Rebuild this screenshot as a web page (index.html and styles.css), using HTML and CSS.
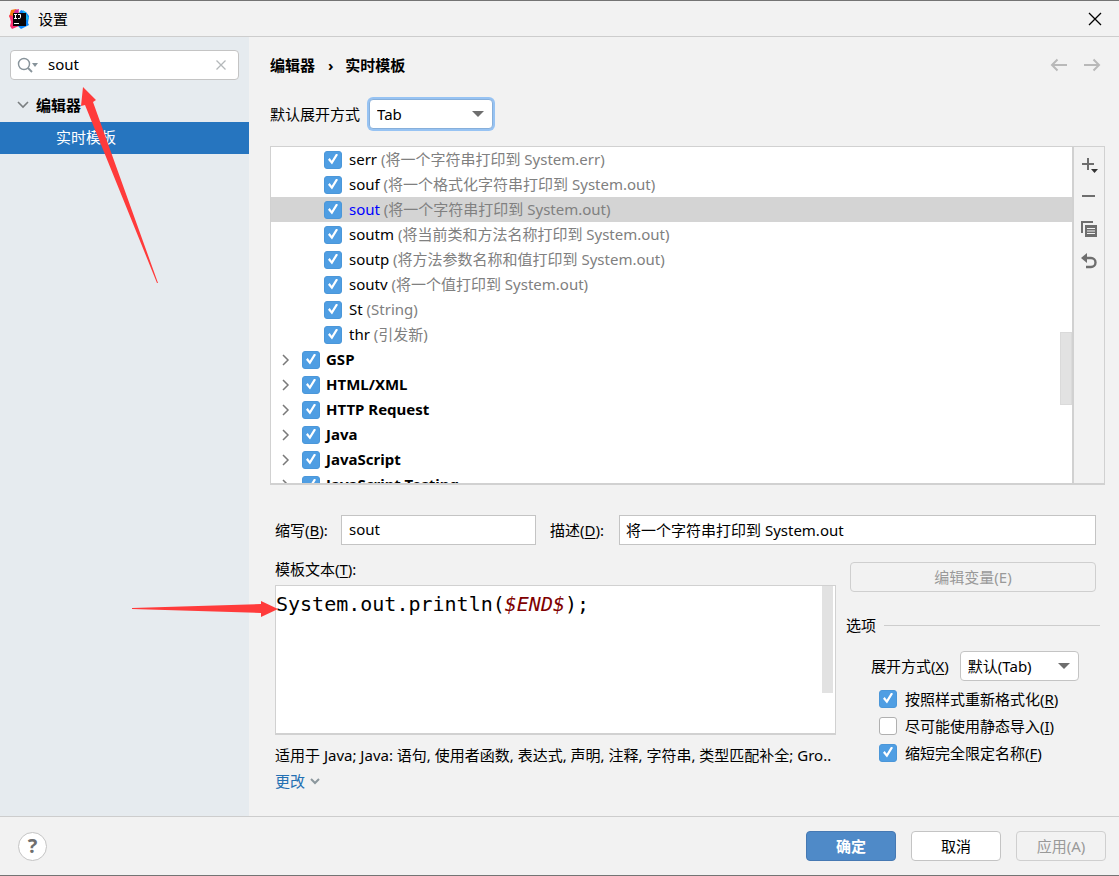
FILE: index.html
```html
<!DOCTYPE html>
<html lang="zh-CN">
<head>
<meta charset="UTF-8" />
<meta name="viewport" content="width=device-width, initial-scale=1" />
<title>设置</title>
<link rel="stylesheet" href="styles.css">
</head>
<body>

<div class="dialog">
  <header class="titlebar">
    <svg class="logo" width="20" height="20" viewBox="0 0 20 20">
      <path d="M2 1 L7 0 L10 3 L5 10 L0 8 L1 5Z" fill="#f97a12"/>
      <path d="M0 6 L4 7 L6 14 L10 17 L3 20 L1 17 L2 13Z" fill="#fc2f72"/>
      <path d="M6 1 L10 0 L9 6 L4 6Z" fill="#d22d9b"/>
      <path d="M12 1 L17 3 L20 7 L19 14 L20 16 L12 20 L9 17 L10 4Z" fill="#0a83fa"/>
      <path d="M14 1 L17 4 L20 10 L17 11 L14 5Z" fill="#14b9ef"/>
      <rect x="4" y="4" width="13" height="13" fill="#0b0508"/>
      <path d="M5 5.500h3M6.500 5.500v4M5 9.500h3M9 5.500h2.500v3q0 1-1.500 1h-1" fill="none" stroke="#fff"/>
      <path d="M5 14.500h5" stroke="#fff"/>
    </svg>
    <h1>设置</h1>
    <button type="button" class="icon-button close" aria-label="关闭">
      <svg width="14" height="14" viewBox="0 0 14 14"><path d="M1 1l12 12M13 1L1 13" stroke="#000" stroke-width="1.300"/></svg>
    </button>
  </header>

  <div class="body">
    <aside class="sidebar">
      <div class="search">
        <svg width="22" height="16" viewBox="0 0 22 16">
          <circle cx="7" cy="7" r="5.500" fill="none" stroke="#87939a" stroke-width="1.400"/>
          <path d="M11 11l4 4" stroke="#87939a" stroke-width="1.800"/>
          <path d="M15 6h6l-3 4z" fill="#87939a"/>
        </svg>
        <input type="text" id="searchInput" value="sout" aria-label="搜索" />
        <button type="button" class="icon-button" aria-label="清除">
          <svg width="10" height="10" viewBox="0 0 10 10"><path d="M0.500 0.500l9 9M9.500 0.500l-9 9" stroke="#b4b8ba" stroke-width="1.300"/></svg>
        </button>
      </div>
      <nav>
        <a href="#editor" class="nav-group">
          <svg width="12" height="8" viewBox="0 0 12 8"><path d="M1 1l5 5 5-5" fill="none" stroke="#7a7e80" stroke-width="1.600"/></svg>
          编辑器
        </a>
        <a href="#live-templates" class="nav-item selected">实时模板</a>
      </nav>
    </aside>

    <main class="content">
      <div class="page-head">
        <h2>编辑器 <span>›</span> 实时模板</h2>
        <button type="button" class="icon-button" aria-label="后退">
          <svg width="18" height="14" viewBox="0 0 18 14"><path d="M17 7H2M7.500 1.500L2 7l5.500 5.500" fill="none" stroke="#b9b9b9" stroke-width="2"/></svg>
        </button>
        <button type="button" class="icon-button" aria-label="前进">
          <svg width="18" height="14" viewBox="0 0 18 14"><path d="M1 7h15M10.500 1.500L16 7l-5.500 5.500" fill="none" stroke="#b9b9b9" stroke-width="2"/></svg>
        </button>
      </div>

      <div class="expand-row">
        <label for="expandSelect">默认展开方式</label>
        <div class="select focused">
          <select id="expandSelect"><option>Tab</option><option>Enter</option></select>
        </div>
      </div>

      <div class="templates">
        <div class="tree">
          <ul>
            <li class="leaf"><input type="checkbox" id="t1" checked /><label for="t1">serr <span>(将一个字符串打印到 System.err)</span></label></li>
            <li class="leaf"><input type="checkbox" id="t2" checked /><label for="t2">souf <span>(将一个格式化字符串打印到 System.out)</span></label></li>
            <li class="leaf active"><input type="checkbox" id="t3" checked /><label for="t3">sout <span>(将一个字符串打印到 System.out)</span></label></li>
            <li class="leaf"><input type="checkbox" id="t4" checked /><label for="t4">soutm <span>(将当前类和方法名称打印到 System.out)</span></label></li>
            <li class="leaf"><input type="checkbox" id="t5" checked /><label for="t5">soutp <span>(将方法参数名称和值打印到 System.out)</span></label></li>
            <li class="leaf"><input type="checkbox" id="t6" checked /><label for="t6">soutv <span>(将一个值打印到 System.out)</span></label></li>
            <li class="leaf"><input type="checkbox" id="t7" checked /><label for="t7">St <span>(String)</span></label></li>
            <li class="leaf"><input type="checkbox" id="t8" checked /><label for="t8">thr <span>(引发新)</span></label></li>
            <li class="group"><svg width="8" height="12" viewBox="0 0 8 12"><path d="M1 1l5 5-5 5"/></svg><input type="checkbox" id="g1" checked /><label for="g1">GSP</label></li>
            <li class="group"><svg width="8" height="12" viewBox="0 0 8 12"><path d="M1 1l5 5-5 5"/></svg><input type="checkbox" id="g2" checked /><label for="g2">HTML/XML</label></li>
            <li class="group"><svg width="8" height="12" viewBox="0 0 8 12"><path d="M1 1l5 5-5 5"/></svg><input type="checkbox" id="g3" checked /><label for="g3">HTTP Request</label></li>
            <li class="group"><svg width="8" height="12" viewBox="0 0 8 12"><path d="M1 1l5 5-5 5"/></svg><input type="checkbox" id="g4" checked /><label for="g4">Java</label></li>
            <li class="group"><svg width="8" height="12" viewBox="0 0 8 12"><path d="M1 1l5 5-5 5"/></svg><input type="checkbox" id="g5" checked /><label for="g5">JavaScript</label></li>
            <li class="group"><svg width="8" height="12" viewBox="0 0 8 12"><path d="M1 1l5 5-5 5"/></svg><input type="checkbox" id="g6" checked /><label for="g6">JavaScript Testing</label></li>
          </ul>
          <div class="tree-thumb"></div>
        </div>
        <div class="toolbar">
          <button type="button" class="icon-button" aria-label="添加">
            <svg width="18" height="18" viewBox="0 0 18 18"><path d="M8 2v12M2 8h12" stroke="#6e6e6e" stroke-width="2"/><path d="M11 13h7l-3.500 4z" fill="#333"/></svg>
          </button>
          <button type="button" class="icon-button" aria-label="删除">
            <svg width="18" height="18" viewBox="0 0 18 18"><path d="M2 8h13" stroke="#6e6e6e" stroke-width="2"/></svg>
          </button>
          <button type="button" class="icon-button" aria-label="复制">
            <svg width="18" height="18" viewBox="0 0 18 18"><path d="M2 13V2h11" fill="none" stroke="#6e6e6e" stroke-width="2"/><path d="M5 5h12v12H5z" fill="#6e6e6e"/><path d="M7 8.500h8M7 11h8M7 13.500h8" stroke="#f2f2f2"/></svg>
          </button>
          <button type="button" class="icon-button" aria-label="还原">
            <svg width="18" height="18" viewBox="0 0 18 18"><path d="M5 6h6a4.500 4.500 0 0 1 0 9H6" fill="none" stroke="#6e6e6e" stroke-width="2.400"/><path d="M1 6l6-5v10z" fill="#6e6e6e"/></svg>
          </button>
        </div>
      </div>

      <form class="details">
        <div class="fields">
          <label for="abbrInput">缩写(<u>B</u>):</label>
          <input type="text" id="abbrInput" class="abbr" value="sout" />
          <label for="descInput">描述(<u>D</u>):</label>
          <input type="text" id="descInput" class="desc" value="将一个字符串打印到 System.out" />
        </div>

        <div class="columns">
          <div class="template">
            <div class="template-label" id="templateLabel">模板文本(<u>T</u>):</div>
            <div class="code">
              <div class="code-text" role="textbox" aria-multiline="true" aria-labelledby="templateLabel" contenteditable="true" spellcheck="false">System.out.println(<i>$END$</i>);</div>
              <div class="code-thumb"></div>
            </div>
            <p class="applicable">适用于 Java; Java: 语句, 使用者函数, 表达式, 声明, 注释, 字符串, 类型匹配补全; Gro..</p>
            <a href="#change" class="change">更改
              <svg width="10" height="7" viewBox="0 0 10 7"><path d="M1 1l4 4 4-4" fill="none" stroke="#8b979d" stroke-width="2"/></svg>
            </a>
          </div>

          <div class="options">
            <button type="button" class="button edit-vars" disabled>编辑变量(E)</button>
            <h3>选项</h3>
            <div class="option-expand">
              <label for="optExpand">展开方式(<u>X</u>)</label>
              <div class="select">
                <select id="optExpand"><option>默认(Tab)</option><option>Enter</option></select>
              </div>
            </div>
            <div class="option"><input type="checkbox" id="optReformat" checked /><label for="optReformat">按照样式重新格式化(<u>R</u>)</label></div>
            <div class="option"><input type="checkbox" id="optStatic" /><label for="optStatic">尽可能使用静态导入(<u>I</u>)</label></div>
            <div class="option"><input type="checkbox" id="optShorten" checked /><label for="optShorten">缩短完全限定名称(<u>F</u>)</label></div>
          </div>
        </div>
      </form>
    </main>
  </div>

  <footer class="footer">
    <button type="button" class="help" aria-label="帮助">?</button>
    <button type="button" class="button primary">确定</button>
    <button type="button" class="button">取消</button>
    <button type="button" class="button" disabled>应用(A)</button>
  </footer>

  <!-- pointers to the search box and the template text -->
  <svg class="pointer pointer-search" width="80" height="200" viewBox="0 0 80 200"><path d="M3 0L16 13L13 15L78 196L77 196L5 18L1 19Z" fill="#ff3b3b"/></svg>
  <svg class="pointer pointer-code" width="146" height="16" viewBox="0 0 146 16"><path d="M0 7L129 3V0L146 8L129 16V12L0 8Z" fill="#ff3b3b"/></svg>
</div>

</body>
</html>
```
FILE: styles.css
```css
* {
  box-sizing: border-box;
}
body {
  margin: 0;
  font-family: "Noto Sans", "Noto Sans CJK SC", sans-serif;
  font-size: 15px;
  line-height: 20px;
  color: #000;
  background: #f2f2f2;
}
h1, h2, h3, p, ul {
  margin: 0;
  padding: 0;
  font-size: 15px;
}
input, select, button {
  font: inherit;
  color: inherit;
}
svg {
  display: block;
  flex: none;
}
a {
  text-decoration: none;
}
u {
  text-underline-offset: 2px;
}
.dialog {
  position: relative;
  display: flex;
  flex-direction: column;
  height: 100vh;
  min-height: 700px;
  border-top: 1px solid #747474;
  border-bottom: 1px solid #747474;
}
.icon-button {
  display: flex;
  padding: 0;
  border: none;
  background: none;
  cursor: pointer;
}

/* Title bar */
.titlebar {
  display: flex;
  align-items: center;
  height: 36px;
  padding: 0 17px 0 9px;
  border-bottom: 1px solid #cdcdcd;
}
.titlebar h1 {
  flex: 1;
  margin-left: 9px;
  font-weight: normal;
}
.body {
  display: flex;
  flex: 1;
  min-height: 0;
}

/* Sidebar */
.sidebar {
  flex: none;
  width: 249px;
  background: #e6ebef;
}
.search {
  display: flex;
  align-items: center;
  height: 30px;
  margin: 13px 10px 10px;
  padding: 0 12px 0 6px;
  background: #fff;
  border: 1px solid #c4c4c4;
  border-radius: 4px;
}
.search input {
  flex: 1;
  min-width: 0;
  padding: 0 0 2px 9px;
  border: none;
  outline: none;
  background: none;
}
.nav-group,
.nav-item {
  display: flex;
  align-items: center;
  height: 32px;
  padding-bottom: 2px;
  color: #000;
}
.nav-group {
  gap: 7px;
  padding-left: 17px;
  font-weight: bold;
}
.nav-item {
  padding-left: 56px;
}
.nav-item.selected {
  background: #2675bf;
  color: #fff;
}

/* Content */
.content {
  display: flex;
  flex: 1;
  flex-direction: column;
  min-width: 0;
  padding: 18px 14px 25px 21px;
}
.page-head {
  display: flex;
  align-items: center;
  gap: 15px;
  padding-right: 4px;
}
.page-head h2 {
  flex: 1;
}
.page-head span {
  margin: 0 8px 0 9px;
}
.expand-row {
  display: flex;
  align-items: center;
  gap: 9px;
  margin: 24px 0 17px;
}
.select {
  position: relative;
}
.select select {
  display: block;
  width: 119px;
  height: 30px;
  padding: 0 28px 0 7px;
  appearance: none;
  background: #fff;
  border: 1px solid #c4c4c4;
  border-radius: 4px;
  outline: none;
}
.select::after {
  content: "";
  position: absolute;
  top: 12px;
  right: 9px;
  border: 6px solid transparent;
  border-top-color: #6e6e6e;
  border-bottom: none;
  pointer-events: none;
}
.select.focused select {
  width: 124px;
  border-color: #87afda;
  box-shadow: 0 0 0 2px #97c3f3;
}

input[type="checkbox"] {
  position: relative;
  flex: none;
  width: 18px;
  height: 18px;
  margin: 0;
  appearance: none;
  background: #fff;
  border: 1px solid #b0b0b0;
  border-radius: 3px;
}
input[type="checkbox"]:checked {
  background: #4f9ee3;
  border-color: #4b97d9;
}
input[type="checkbox"]:checked::after {
  content: "";
  position: absolute;
  top: 2px;
  left: 3px;
  width: 10px;
  height: 11px;
  background: #fff;
  clip-path: polygon(0 56%, 17% 41%, 37% 66%, 82% 0, 100% 12%, 40% 100%);
}

/* Template tree */
.templates {
  display: flex;
  flex: 1;
  min-height: 0;
  border: 1px solid #d1d1d1;
  border-bottom-width: 2px;
}
.tree {
  position: relative;
  flex: 1;
  overflow: hidden;
  background: #fff;
  border-right: 2px solid #d1d1d1;
}
.tree ul {
  list-style: none;
}
.tree li {
  display: flex;
  align-items: center;
  height: 25px;
}
.tree label {
  padding-bottom: 2px;
}
.tree .leaf {
  gap: 7px;
  padding-left: 53px;
}
.tree .leaf span {
  color: #808080;
}
.tree .active {
  background: #d4d4d4;
  color: #00f;
}
.tree .group {
  padding-left: 11px;
  font-weight: bold;
}
.tree .group input {
  margin: 0 6px 0 12px;
}
.tree .group path {
  fill: none;
  stroke: #7a7a7a;
  stroke-width: 1.5;
}
.tree-thumb {
  position: absolute;
  right: 0;
  bottom: 78px;
  width: 12px;
  height: 73px;
  background: #e2e2e2;
  border: 1px solid #dadada;
}
.toolbar {
  display: flex;
  flex: none;
  flex-direction: column;
  align-items: center;
  gap: 14px;
  width: 30px;
  padding-top: 9px;
}

/* Details */
.details {
  padding: 30px 0 0 5px;
}
.fields {
  display: flex;
  align-items: center;
  padding-right: 9px;
}
.fields label {
  flex: none;
  width: 66px;
}
.fields input {
  height: 30px;
  padding: 0 6px 2px;
  background: #fff;
  border: 1px solid #c4c4c4;
  outline: none;
}
.fields .abbr {
  width: 195px;
  margin-right: 14px;
  padding-left: 7px;
}
.fields .desc {
  flex: 1;
  min-width: 0;
  margin-left: 3px;
}
.columns {
  display: flex;
  gap: 10px;
  padding-right: 5px;
}
.template {
  flex: 1;
  min-width: 0;
}
.template-label {
  margin: 14px 0 6px;
}
.code {
  position: relative;
  height: 150px;
  background: #fff;
  border: 1px solid #d1d1d1;
  border-bottom-width: 2px;
}
.code-text {
  height: 100%;
  padding-top: 6px;
  font: 20px/24px "DejaVu Sans Mono", monospace;
  outline: none;
}
.code-text i {
  color: #800000;
}
.code-thumb {
  position: absolute;
  top: 0;
  right: 2px;
  width: 11px;
  height: 107px;
  background: #e2e2e2;
}
.applicable {
  margin: 10px 0 6px;
  white-space: nowrap;
}
.change {
  display: inline-flex;
  align-items: center;
  gap: 5px;
  color: #2470b3;
}
.options {
  flex: none;
  width: 254px;
  padding-top: 17px;
}
.button {
  width: 90px;
  height: 30px;
  padding: 0;
  background: #fff;
  border: 1px solid #c4c4c4;
  border-radius: 4px;
}
.button:disabled {
  background: none;
  border-color: #cfcfcf;
  color: #999;
}
.button.edit-vars {
  width: 246px;
  margin-left: 4px;
}
.options h3 {
  display: flex;
  align-items: center;
  gap: 8px;
  margin: 23px 0 16px;
  font-weight: normal;
}
.options h3::after {
  content: "";
  flex: 1;
  border-top: 1px solid #cdcdcd;
}
.option-expand {
  display: flex;
  align-items: center;
  gap: 11px;
  margin-bottom: 4px;
  padding-left: 25px;
}
.option {
  display: flex;
  align-items: center;
  gap: 8px;
  height: 27px;
  padding-left: 33px;
}

/* Footer */
.footer {
  display: flex;
  align-items: center;
  gap: 15px;
  height: 59px;
  padding: 0 13px 0 18px;
  border-top: 1px solid #cdcdcd;
}
.help {
  width: 29px;
  height: 29px;
  margin-right: auto;
  padding: 0;
  background: #fff;
  border: 1px solid #c4c4c4;
  border-radius: 50%;
  color: #6e6e6e;
  font-size: 20px;
  font-weight: bold;
}
.button.primary {
  background: #4f8ac8;
  border-color: #4679b3;
  color: #fff;
  font-weight: bold;
}

.pointer {
  position: absolute;
  pointer-events: none;
}
.pointer-search {
  top: 86px;
  left: 80px;
}
.pointer-code {
  top: 600px;
  left: 132px;
}
```
